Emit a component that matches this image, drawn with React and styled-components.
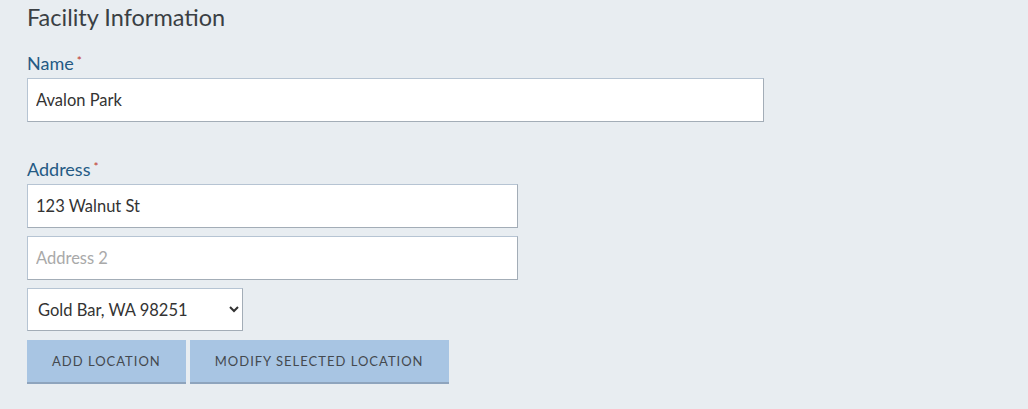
import React from 'react';
import styled, { createGlobalStyle } from 'styled-components';

const GlobalStyle = createGlobalStyle`
  html, body {
    margin: 0;
    padding: 0;
    background: #e8edf1;
  }
  body {
    font-family: Lato, "Open Sans", sans-serif;
    color: #333;
  }
`;

const Page = styled.div`
  padding: 2px 27px 24px;
  box-sizing: border-box;
  min-height: 409px;
`;

const Title = styled.h2`
  margin: 0 0 20px;
  font-size: 23.5px;
  font-weight: 400;
  line-height: 30px;
  color: #3a3f44;
`;

const Field = styled.div`
  display: flex;
  flex-direction: column;
  width: ${(p) => p.width}px;
  margin-bottom: ${(p) => p.spacing || 0}px;
`;

const Stack = styled.div`
  display: flex;
  flex-direction: column;
  gap: 8px;
`;

const Label = styled.label`
  font-size: 18px;
  line-height: 22px;
  margin-bottom: 4px;
  color: #245a84;
`;

const Required = styled.span`
  color: #c0392b;
  font-size: 12px;
  vertical-align: top;
  margin-left: 3px;
  line-height: 18px;
`;

const Input = styled.input`
  box-sizing: border-box;
  width: 100%;
  height: 44px;
  padding: 0 8px;
  border: 1px solid #b6c4d3;
  border-right-color: #a3adb7;
  border-bottom-color: #a3adb7;
  background: #fff;
  font-family: inherit;
  font-size: 16.5px;
  color: #333;
  outline: none;

  &::placeholder {
    color: #a9a9a9;
  }
`;

const Select = styled.select`
  box-sizing: border-box;
  width: 216px;
  height: 43px;
  padding: 0 6px;
  border: 1px solid #b6c4d3;
  border-right-color: #a3adb7;
  border-bottom-color: #a3adb7;
  border-radius: 0;
  background: #fff;
  font-family: inherit;
  font-size: 16.5px;
  color: #333;
`;

const ButtonRow = styled.div`
  display: flex;
  gap: 4px;
  margin-top: 9px;
`;

const Button = styled.button`
  height: 44px;
  padding: 0 ${(p) => p.pad}px;
  border: none;
  border-bottom: 2px solid #8ea4bd;
  border-radius: 0;
  background: #a8c5e3;
  font-family: inherit;
  font-size: 13px;
  letter-spacing: 1px;
  color: #44494f;
  cursor: pointer;
`;

export default function App() {
  return (
    <>
      <GlobalStyle />
      <Page>
        <Title>Facility Information</Title>
        <Field width={737} spacing={36}>
          <Label>
            Name<Required>*</Required>
          </Label>
          <Input defaultValue="Avalon Park" />
        </Field>
        <Field width={491}>
          <Label>
            Address<Required>*</Required>
          </Label>
          <Stack>
            <Input defaultValue="123 Walnut St" />
            <Input placeholder="Address 2" />
            <Select defaultValue="goldbar">
              <option value="goldbar">Gold Bar, WA 98251</option>
            </Select>
          </Stack>
        </Field>
        <ButtonRow>
          <Button pad={25}>ADD LOCATION</Button>
          <Button pad={25}>MODIFY SELECTED LOCATION</Button>
        </ButtonRow>
      </Page>
    </>
  );
}
